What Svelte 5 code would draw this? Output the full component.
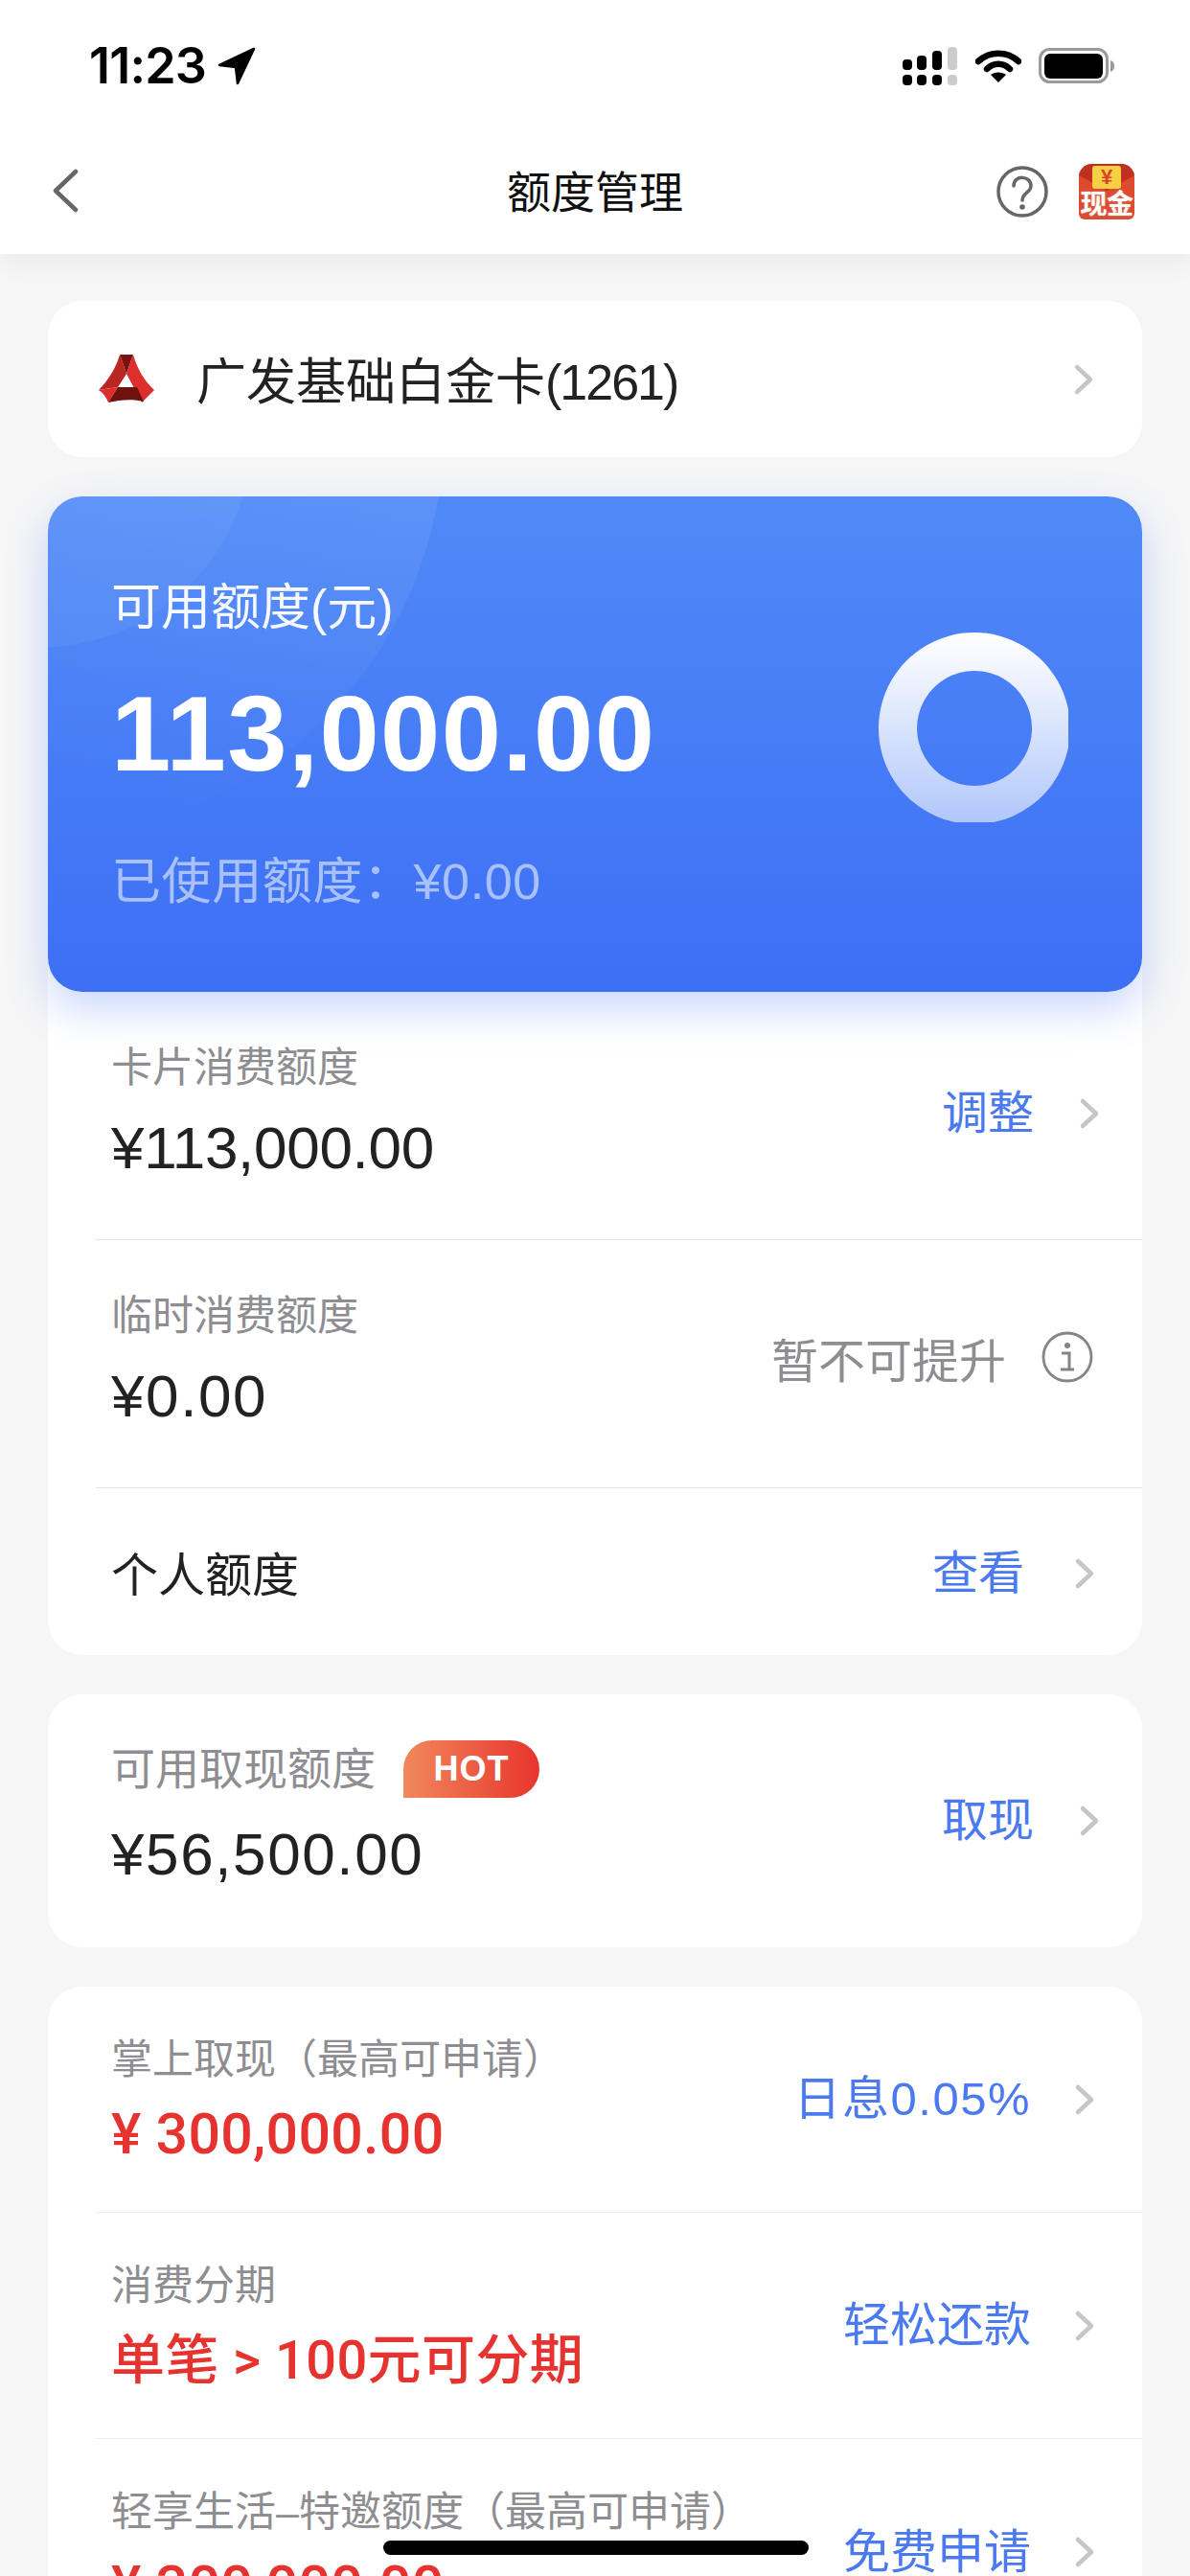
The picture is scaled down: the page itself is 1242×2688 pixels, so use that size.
<script>
  const quotaRows = [
    { label: '卡片消费额度', value: '¥113,000.00', action: '调整', kind: 'wide', tight: true },
    { label: '临时消费额度', value: '¥0.00', action: '暂不可提升', kind: 'info', tight: false }
  ];

  const offers = [
    { label: '掌上取现（最高可申请）', value: '¥ 300,000.00', action: '日息0.05%', rate: true },
    { label: '消费分期', value: '单笔 > 100元可分期', action: '轻松还款', small: true },
    { label: '轻享生活–特邀额度（最高可申请）', value: '¥ 300,000.00', action: '免费申请' }
  ];
</script>

{#snippet chevron()}
  <svg class="chevron" viewBox="0 0 22 34" aria-hidden="true">
    <path d="M4 4 L18 17 L4 30" fill="none" stroke="#c6c6ca" stroke-width="4.5" stroke-linecap="round" stroke-linejoin="round" />
  </svg>
{/snippet}

<div class="page">
  <header class="top">
    <div class="status">
      <div class="time">
        <span>11:23</span>
        <svg class="arrow" viewBox="0 0 40 40" aria-hidden="true">
          <path d="M38 2 L2 19 L19 21 L21 38 Z" fill="#000" stroke="#000" stroke-width="2.5" stroke-linejoin="round" />
        </svg>
      </div>
      <div class="status-icons">
        <svg class="signal" viewBox="0 0 58 40" aria-hidden="true">
          <rect x="0" y="13" width="10" height="11" rx="4" fill="#000" />
          <rect x="15" y="9" width="10" height="15" rx="4" fill="#000" />
          <rect x="31" y="4" width="10" height="20" rx="4" fill="#000" />
          <rect x="47" y="0" width="10" height="24" rx="4" fill="#ccc" />
          <rect x="0" y="29" width="10" height="11" rx="4" fill="#000" />
          <rect x="15" y="29" width="10" height="11" rx="4" fill="#000" />
          <rect x="31" y="29" width="10" height="11" rx="4" fill="#000" />
          <rect x="47" y="29" width="10" height="11" rx="4" fill="#ccc" />
        </svg>
        <svg class="wifi" viewBox="0 0 48 36" aria-hidden="true">
          <path d="M3 13 C15 2 33 2 45 13" fill="none" stroke="#000" stroke-width="6.5" stroke-linecap="round" />
          <path d="M12 21 C19 14 29 14 36 21" fill="none" stroke="#000" stroke-width="6.5" stroke-linecap="round" />
          <path d="M16 27 C20 23.500 28 23.500 32 27 L24 35 Z" fill="#000" />
        </svg>
        <svg class="battery" viewBox="0 0 80 38" aria-hidden="true">
          <rect x="1.500" y="1.500" width="70" height="34" rx="10" fill="none" stroke="#9a9a9a" stroke-width="3" />
          <rect x="6" y="6" width="61" height="26" rx="6" fill="#000" />
          <path d="M75 13 C78 14 79 16 79 19 C79 22 78 24 75 25 Z" fill="#9a9a9a" />
        </svg>
      </div>
    </div>
    <nav class="nav">
      <svg class="back" viewBox="0 0 28 46" aria-hidden="true">
        <path d="M25 3 L4 23 L25 43" fill="none" stroke="#666" stroke-width="4.500" stroke-linecap="round" stroke-linejoin="round" />
      </svg>
      <h1>额度管理</h1>
      <div class="nav-icons">
        <svg class="help" viewBox="0 0 54 54" aria-hidden="true">
          <circle cx="27" cy="27" r="25" fill="none" stroke="#666" stroke-width="3.500" />
          <path d="M18 21 C18 9 36 10 36 21 C36 28 27 28 27 36" fill="none" stroke="#666" stroke-width="3.500" stroke-linecap="round" />
          <circle cx="27" cy="43" r="2.800" fill="#666" />
        </svg>
        <div class="cash-icon">
          <svg class="flap" viewBox="0 0 58 30" aria-hidden="true">
            <path d="M0 6 C0 2 3 0 7 0 H51 C55 0 58 2 58 6 V12 L29 28 L0 12 Z" fill="#bf3020" />
          </svg>
          <span class="coin">¥</span>
          <span class="cash-text">现金</span>
        </div>
      </div>
    </nav>
  </header>

  <main class="content">
    <section class="card bank">
      <svg class="logo" viewBox="0 0 58 51" aria-hidden="true">
        <path d="M22 0 C18 14 10 27 0 37 L20 34 L29 20 Z" fill="#b92623" />
        <path d="M22 0 H36 L29 20 Z" fill="#7a1411" />
        <path d="M36 0 C40 14 47 27 58 37 L45 50 L29 20 Z" fill="#dd2f2b" />
        <path d="M0 37 C5 40 8 45 10 50 L20 34 Z" fill="#dc2e2a" />
        <path d="M20 34 H40 L47 49 C36 46 22 47 10 50 Z" fill="#6f120f" />
      </svg>
      <span class="bank-name">广发基础白金卡<span class="card-no">(1261)</span></span>
      {@render chevron()}
    </section>

    <section class="card quota">
      <div class="hero">
        <div class="arc arc-large"></div>
        <div class="arc arc-small"></div>
        <div class="hero-text">
          <div class="hero-label">可用额度(元)</div>
          <div class="hero-amount">113,000.00</div>
          <div class="hero-used">已使用额度：¥0.00</div>
        </div>
        <svg class="ring" viewBox="0 0 198 198" aria-hidden="true">
          <defs>
            <linearGradient id="ringFill" x1="0" y1="0" x2="0" y2="1">
              <stop offset="0" stop-color="#fff" />
              <stop offset="1" stop-color="#fff" stop-opacity="0.58" />
            </linearGradient>
          </defs>
          <path fill="url(#ringFill)" fill-rule="evenodd" d="M100 0 A100 100 0 1 1 99.900 0 Z M100 40 A60 60 0 1 0 100.100 40 Z" />
        </svg>
      </div>

      {#each quotaRows as row}
        <div class="row quota-row">
          <div class="text">
            <div class="label">{row.label}</div>
            <div class="value" class:tight={row.tight}>{row.value}</div>
          </div>
          {#if row.kind === 'info'}
            <div class="action muted info">
              <span>{row.action}</span>
              <svg class="info-icon" viewBox="0 0 54 54" aria-hidden="true">
                <circle cx="27" cy="27" r="25" fill="none" stroke="#858585" stroke-width="2.800" />
                <circle cx="27" cy="15" r="3" fill="#858585" />
                <path d="M21 23 H29 V39 M20 40 H34" fill="none" stroke="#858585" stroke-width="3" />
              </svg>
            </div>
          {:else}
            <div class="action wide">
              <span>{row.action}</span>
              {@render chevron()}
            </div>
          {/if}
        </div>
      {/each}

      <div class="row personal">
        <span class="personal-label">个人额度</span>
        <div class="action">
          <span>查看</span>
          {@render chevron()}
        </div>
      </div>
    </section>

    <section class="card">
      <div class="row cash">
        <div class="text">
          <div class="label with-badge">可用取现额度 <span class="hot">HOT</span></div>
          <div class="value">¥56,500.00</div>
        </div>
        <div class="action wide">
          <span>取现</span>
          {@render chevron()}
        </div>
      </div>
    </section>

    <section class="card offers">
      {#each offers as offer}
        <div class="row offer">
          <div class="text">
            <div class="label">{offer.label}</div>
            <div class="value red" class:small={offer.small}>{offer.value}</div>
          </div>
          <div class="action offer-action" class:rate={offer.rate}>
            <span>{offer.action}</span>
            {@render chevron()}
          </div>
        </div>
      {/each}
    </section>
  </main>

  <div class="home-bar"></div>
</div>

<style>
  :global(body) {
    background: #f6f6f7;
  }

  .page {
    position: relative;
    width: 1242px;
    height: 2688px;
    overflow: hidden;
    background: #f6f6f7;
    font-family: "Liberation Sans", "Noto Sans CJK SC", sans-serif;
    color: #222;
  }

  .top {
    position: relative;
    z-index: 2;
    height: 265px;
    background: #fff;
    box-shadow: 0 6px 30px rgba(0, 0, 0, 0.06);
  }

  .status {
    height: 135px;
    padding: 2px 78px 0 93px;
    display: flex;
    justify-content: space-between;
    align-items: center;
    box-sizing: border-box;
  }

  .time {
    display: flex;
    align-items: center;
    gap: 12px;
    font-family: Inter, sans-serif;
    font-weight: 600;
    font-size: 52px;
    letter-spacing: -0.8px;
    color: #000;
  }

  .arrow {
    width: 40px;
    height: 40px;
  }

  .status-icons {
    display: flex;
    align-items: center;
    gap: 18px;
  }

  .signal {
    width: 58px;
    height: 40px;
  }

  .wifi {
    width: 48px;
    height: 36px;
  }

  .battery {
    width: 80px;
    height: 38px;
  }

  .nav {
    height: 130px;
    padding: 0 58px 6px 54px;
    position: relative;
    display: flex;
    align-items: center;
    justify-content: space-between;
    box-sizing: border-box;
  }

  .back {
    width: 28px;
    height: 46px;
    margin-top: 4px;
  }

  h1 {
    position: absolute;
    left: 0;
    right: 0;
    margin: 0;
    text-align: center;
    font-size: 46px;
    font-weight: 400;
    color: #111;
  }

  .nav-icons {
    position: relative;
    display: flex;
    align-items: center;
    gap: 32px;
    margin-top: 6px;
  }

  .help {
    width: 54px;
    height: 54px;
  }

  .cash-icon {
    position: relative;
    width: 58px;
    height: 58px;
    border-radius: 14px 14px 6px 6px;
    background: #dc4a30;
    overflow: hidden;
  }

  .flap {
    position: absolute;
    left: 0;
    top: 0;
    width: 58px;
    height: 30px;
  }

  .coin {
    position: absolute;
    left: 14px;
    top: 2px;
    width: 30px;
    height: 24px;
    border-radius: 3px;
    background: #f7cf45;
    color: #d8432a;
    font-size: 22px;
    font-weight: 700;
    line-height: 24px;
    text-align: center;
  }

  .cash-text {
    position: absolute;
    left: 0;
    right: 0;
    bottom: 0;
    color: #fff;
    font-size: 28px;
    font-weight: 700;
    line-height: 30px;
    text-align: center;
    white-space: nowrap;
    letter-spacing: -0.5px;
    text-shadow: 0 0 2px #f29a80;
  }

  .content {
    padding: 49px 50px 0;
    display: flex;
    flex-direction: column;
    gap: 41px;
  }

  .card {
    background: #fff;
    border-radius: 36px;
  }

  .bank {
    height: 163px;
    padding: 0 50px 0 53px;
    display: flex;
    align-items: center;
    box-sizing: border-box;
    flex-shrink: 0;
  }

  .logo {
    width: 58px;
    height: 51px;
  }

  .bank-name {
    margin-left: 44px;
    margin-bottom: 3px;
    flex: 1;
    font-size: 52px;
  }

  .card-no {
    letter-spacing: -2px;
  }

  .chevron {
    width: 22px;
    height: 34px;
    flex-shrink: 0;
  }

  .hero {
    position: relative;
    height: 517px;
    padding: 86px 77px 0 66px;
    display: flex;
    justify-content: space-between;
    align-items: flex-start;
    box-sizing: border-box;
    border-radius: 36px;
    background: linear-gradient(180deg, #508af7 0%, #3d6ff5 100%);
    box-shadow: 0 18px 44px rgba(61, 111, 245, 0.28);
    overflow: hidden;
    color: #fff;
  }

  .arc {
    position: absolute;
    border-radius: 50%;
  }

  .arc-large {
    left: -433px;
    top: -491px;
    width: 846px;
    height: 846px;
    background: linear-gradient(20deg, rgba(255, 255, 255, 0) 20%, rgba(255, 255, 255, 0.13) 85%);
  }

  .arc-small {
    left: -233px;
    top: -288px;
    width: 446px;
    height: 446px;
    background: rgba(255, 255, 255, 0.05);
  }

  .hero-text {
    position: relative;
    display: flex;
    flex-direction: column;
  }

  .hero-label {
    font-size: 52px;
    line-height: 60px;
    color: rgba(255, 255, 255, 0.95);
  }

  .hero-amount {
    margin-top: 37px;
    font-size: 112px;
    line-height: 130px;
    font-weight: 700;
    letter-spacing: 1.4px;
  }

  .hero-used {
    margin-top: 59px;
    font-size: 52px;
    line-height: 60px;
    letter-spacing: 0.6px;
    color: rgba(255, 255, 255, 0.55);
  }

  .ring {
    position: relative;
    width: 198px;
    height: 198px;
    margin-top: 56px;
  }

  .row {
    margin-left: 50px;
    padding-left: 16px;
    display: flex;
    align-items: center;
    justify-content: space-between;
    box-sizing: border-box;
  }

  .quota-row {
    height: 259px;
    padding-bottom: 4px;
    border-bottom: 1px solid #e4e4e6;
  }

  .quota-row .text {
    padding-bottom: 6px;
  }

  .personal {
    height: 174px;
    padding-top: 4px;
  }

  .personal-label {
    font-size: 49px;
    padding-bottom: 6px;
  }

  .label {
    font-size: 43px;
    line-height: 54px;
    color: #8e8e92;
    white-space: nowrap;
  }

  .value {
    margin-top: 24px;
    font-size: 62px;
    line-height: 66px;
    letter-spacing: 1.6px;
    color: #222;
    white-space: nowrap;
  }

  .value.tight {
    letter-spacing: -0.3px;
  }

  .value.red {
    margin-top: 18px;
    font-family: Roboto, "Noto Sans CJK SC", sans-serif;
    font-size: 59px;
    font-weight: 500;
    letter-spacing: 0.3px;
    color: #e6332f;
  }

  .value.small {
    font-size: 56px;
    letter-spacing: 0.4px;
  }

  .action {
    display: flex;
    align-items: center;
    gap: 52px;
    padding-right: 49px;
    font-size: 48px;
    color: #4a79f0;
  }

  .action span {
    margin-bottom: 10px;
  }

  .action.wide {
    gap: 47px;
    padding-right: 44px;
  }

  .action.muted {
    color: #8e8e92;
  }

  .action.info {
    gap: 37px;
    padding-right: 51px;
    font-size: 49px;
  }

  .info-icon {
    width: 54px;
    height: 54px;
    margin-bottom: 10px;
  }

  .cash {
    height: 264px;
  }

  .cash .text {
    padding-bottom: 17px;
  }

  .cash .label {
    font-size: 46px;
  }

  .cash .value {
    margin-top: 26px;
  }

  .with-badge {
    display: flex;
    align-items: center;
    gap: 29px;
  }

  .hot {
    width: 142px;
    height: 60px;
    border-radius: 30px 30px 30px 0;
    background: linear-gradient(90deg, #f0895c 0%, #e8342d 100%);
    color: #fff;
    font-size: 36px;
    line-height: 60px;
    text-align: center;
    letter-spacing: 1px;
    font-weight: 700;
  }

  .offer {
    height: 236px;
    border-bottom: 1px solid #ececee;
  }

  .offer:last-child {
    border-bottom: 0;
  }

  .offer-action {
    gap: 45px;
    font-size: 49px;
  }

  .offer-action.rate {
    letter-spacing: 1.5px;
  }

  .home-bar {
    position: absolute;
    left: 400px;
    top: 2651px;
    width: 444px;
    height: 15px;
    border-radius: 8px;
    background: #000;
  }
</style>
